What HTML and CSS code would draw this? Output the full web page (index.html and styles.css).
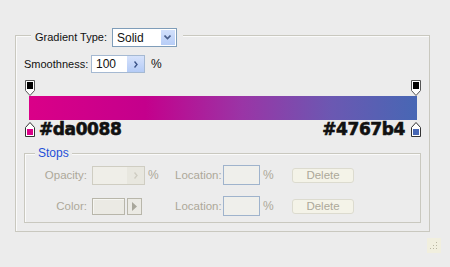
FILE: index.html
```html
<!DOCTYPE html>
<html>
<head>
<meta charset="utf-8">
<link rel="stylesheet" href="styles.css">
</head>
<body>
<div class="dialog">
  <div class="group">
    <div class="legend">
      <span class="lbl">Gradient Type:</span>
      <div class="select">
        <span class="select-val">Solid</span>
        <span class="select-btn"><svg width="7" height="5" viewBox="0 0 7 5"><path d="M0.5 0.5L3.5 3.5L6.5 0.5" fill="none" stroke="#4a5f8a" stroke-width="1.6"/></svg></span>
      </div>
    </div>
    <div class="row smooth">
      <span class="lbl">Smoothness:</span>
      <div class="spin-input">
        <span class="val">100</span>
        <span class="spin-btn"><svg width="4" height="7" viewBox="0 0 4 7"><path d="M0.5 0.5L3 3.5L0.5 6.5" fill="none" stroke="#3c5488" stroke-width="1.4"/></svg></span>
      </div>
      <span class="pct">%</span>
    </div>
    <div class="editor">
      <div class="stops-top">
        <svg class="marker" width="10" height="16" viewBox="0 0 10 16"><path d="M0.5 0.5H9.5V10.5L5 15.5L0.5 10.5Z" fill="#fff" stroke="#555"/><rect x="2" y="2" width="6" height="7" fill="#000"/></svg>
        <svg class="marker" width="10" height="16" viewBox="0 0 10 16"><path d="M0.5 0.5H9.5V10.5L5 15.5L0.5 10.5Z" fill="#fff" stroke="#555"/><rect x="2" y="2" width="6" height="7" fill="#000"/></svg>
      </div>
      <div class="bar"></div>
      <div class="stops-bottom">
        <svg class="marker" width="10" height="15" viewBox="0 0 10 15"><path d="M5 0.5L9.5 5.5V14.5H0.5V5.5Z" fill="#fff" stroke="#333"/><rect x="2" y="7" width="6" height="6" fill="#da0088"/></svg>
        <span class="hex">#da0088</span>
        <span class="spacer"></span>
        <span class="hex">#4767b4</span>
        <svg class="marker" width="10" height="15" viewBox="0 0 10 15"><path d="M5 0.5L9.5 5.5V14.5H0.5V5.5Z" fill="#fff" stroke="#333"/><rect x="2" y="7" width="6" height="6" fill="#4767b4"/></svg>
      </div>
    </div>
    <div class="stops-group">
      <div class="legend2">Stops</div>
      <div class="stops-grid">
        <span class="dlbl right">Opacity:</span>
        <div class="dis-input">
          <span class="dis-spin"><svg width="4" height="7" viewBox="0 0 4 7"><path d="M0.5 0.5L3 3.5L0.5 6.5" fill="none" stroke="#cfcdc2" stroke-width="1.4"/></svg></span>
        </div>
        <span class="dlbl pctd">%</span>
        <span class="dlbl">Location:</span>
        <div class="loc-input"></div>
        <span class="dlbl pctd">%</span>
        <div class="btn">Delete</div>

        <span class="dlbl right">Color:</span>
        <div class="color-cell">
          <div class="color-box"></div>
          <div class="arrow-btn"><svg width="5" height="9" viewBox="0 0 5 9"><path d="M0 0L5 4.5L0 9Z" fill="#a9a79b"/></svg></div>
        </div>
        <span></span>
        <span class="dlbl">Location:</span>
        <div class="loc-input"></div>
        <span class="dlbl pctd">%</span>
        <div class="btn">Delete</div>
      </div>
    </div>
  </div>
  <div class="grip-row">
    <div class="grip">
      <svg width="14" height="15" viewBox="0 0 14 15">
        <rect x="9" y="4" width="1" height="1" fill="#b9b6a2"/>
        <rect x="6" y="7" width="1" height="1" fill="#b9b6a2"/>
        <rect x="9" y="7" width="1" height="1" fill="#b9b6a2"/>
        <rect x="3" y="10" width="1" height="1" fill="#b9b6a2"/>
        <rect x="6" y="10" width="1" height="1" fill="#b9b6a2"/>
        <rect x="9" y="10" width="1" height="1" fill="#b9b6a2"/>
      </svg>
    </div>
  </div>
</div>
</body>
</html>
```
FILE: styles.css
```css
html, body {
  margin: 0;
  padding: 0;
}
body {
  width: 450px;
  height: 267px;
  overflow: hidden;
  background: #ececec;
  font-family: "Liberation Sans", Arial, sans-serif;
  font-size: 11px;
  color: #111;
}
.dialog {
  padding-top: 35px;
}
.group {
  box-sizing: border-box;
  width: 415px;
  margin-left: 15px;
  border: 1px solid #c9c8bf;
  box-shadow: inset 1px 1px 0 #fafafa;
}
.legend {
  display: flex;
  align-items: center;
  width: fit-content;
  margin: -8px 0 0 15px;
  padding: 0 6px 0 4px;
  background: #ececec;
  height: 19px;
}
.lbl {
  line-height: 13px;
  font-size: 11px;
}
.legend .lbl {
  margin-right: 5px;
}
.select {
  box-sizing: border-box;
  width: 65px;
  height: 19px;
  border: 1px solid #7f9db9;
  background: #fff;
  display: flex;
  align-items: center;
  justify-content: space-between;
}
.select-val {
  padding-left: 4px;
  font-size: 12px;
}
.select-btn {
  width: 14px;
  height: 15px;
  margin-right: 1px;
  background: linear-gradient(#d2e0fb, #b7cdf7);
  display: flex;
  align-items: center;
  justify-content: center;
}
.row {
  display: flex;
  align-items: center;
}
.smooth {
  margin: 8px 0 0 8px;
  height: 18px;
}
.smooth .lbl {
  width: 67px;
}
.spin-input {
  box-sizing: border-box;
  width: 54px;
  height: 18px;
  border: 1px solid #a5b9d2;
  background: #fff;
  display: flex;
  align-items: center;
  justify-content: space-between;
}
.spin-input .val {
  padding-left: 4px;
  font-size: 12px;
}
.spin-btn {
  width: 17px;
  height: 16px;
  background: linear-gradient(#d6e2fb, #b4cbf6);
  display: flex;
  align-items: center;
  justify-content: center;
}
.pct {
  margin-left: 6px;
  font-size: 12px;
}
.editor {
  width: 396px;
  margin: 7px 0 0 9px;
}
.stops-top {
  display: flex;
  justify-content: space-between;
  height: 16px;
}
.marker {
  display: block;
}
.bar {
  height: 24px;
  margin: 0 4px;
  background: linear-gradient(to right, #da0088 0%, #c4008c 30%, #9a35a6 55%, #6b58b2 78%, #4767b4 100%);
}
.stops-bottom {
  display: flex;
  align-items: center;
  height: 15px;
  margin-top: 2px;
}
.hex {
  font-family: "DejaVu Sans", sans-serif;
  font-weight: bold;
  font-size: 17px;
  letter-spacing: -0.4px;
  line-height: 15px;
  color: #111;
  -webkit-text-stroke: 0.6px #111;
}
.stops-bottom .hex:first-of-type {
  margin-left: 4px;
}
.stops-bottom .hex:last-of-type {
  margin-right: 6px;
}
.spacer {
  flex: 1;
}
.stops-group {
  margin: 16px 8px 8px 8px;
  border: 1px solid #c9c8bf;
  box-shadow: inset 1px 1px 0 #fafafa;
  padding-bottom: 6px;
}
.legend2 {
  width: fit-content;
  margin: -7px 0 0 10px;
  padding: 0 3px;
  background: #ececec;
  color: #1f4fd8;
  font-size: 12px;
  line-height: 13px;
}
.stops-grid {
  display: grid;
  grid-template-columns: 67px 53px 30px 48px 37px 32px 62px;
  grid-template-rows: 20px 20px;
  row-gap: 11px;
  align-items: center;
  margin-top: 5px;
}
.dlbl {
  color: #aca899;
  font-size: 11.5px;
}
.right {
  text-align: right;
  padding-right: 5px;
}
.pctd {
  padding-left: 3px;
  font-size: 12px;
}
.dis-input {
  box-sizing: border-box;
  height: 19px;
  border: 1px solid #cfcdc2;
  background: #efeee8;
  display: flex;
  justify-content: flex-end;
}
.dis-spin {
  width: 17px;
  background: #e8e7df;
  display: flex;
  align-items: center;
  justify-content: center;
}
.loc-input {
  box-sizing: border-box;
  height: 20px;
  border: 1px solid #9fb3cc;
  background: #efefeb;
}
.btn {
  box-sizing: border-box;
  height: 15px;
  border: 1px solid #dcdbcf;
  border-radius: 3px;
  background: #f4f3e8;
  color: #aca899;
  font-size: 11.5px;
  line-height: 13px;
  text-align: center;
}
.color-cell {
  display: flex;
  align-items: center;
  gap: 2px;
}
.color-box {
  box-sizing: border-box;
  width: 33px;
  height: 17px;
  border: 1px solid #b8b6aa;
  box-shadow: inset 1px 1px 0 #f6f6f2;
  background: #ebeae4;
}
.arrow-btn {
  box-sizing: border-box;
  width: 15px;
  height: 17px;
  border: 1px solid #b8b6aa;
  background: #ebeae4;
  display: flex;
  align-items: center;
  justify-content: center;
}
.grip-row {
  display: flex;
  justify-content: flex-end;
  margin-top: 6px;
  padding-right: 9px;
}
.grip {
  width: 14px;
  height: 15px;
  background: #f1efdf;
}
.grip svg {
  display: block;
}
```
